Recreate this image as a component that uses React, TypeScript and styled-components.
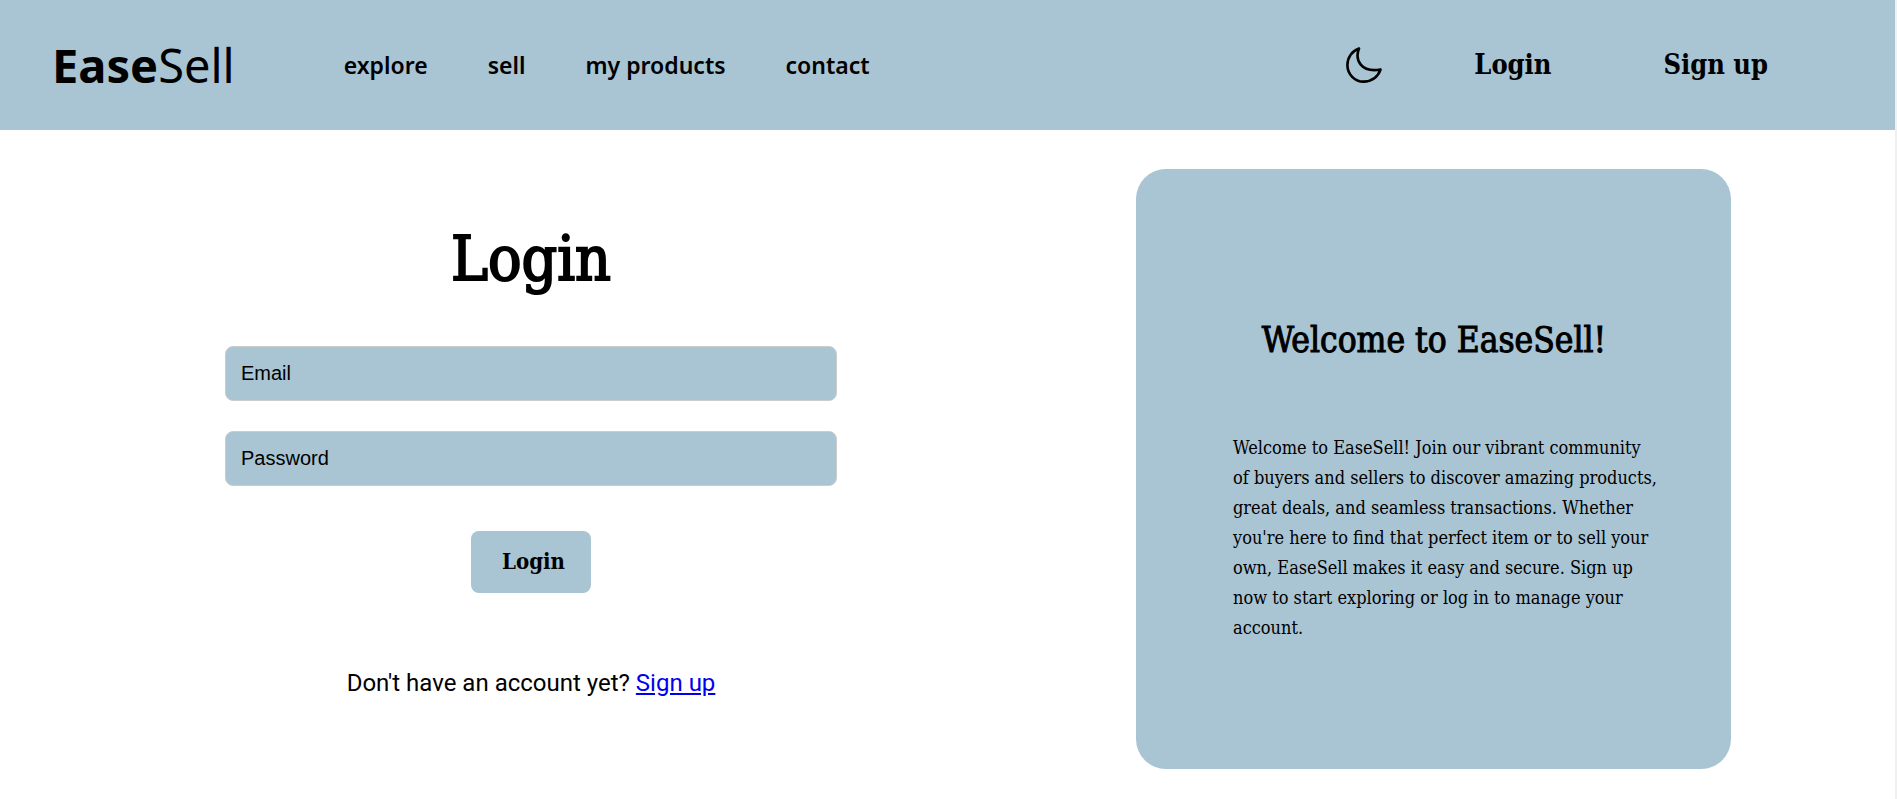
import React from "react";
import styled, { createGlobalStyle, ThemeProvider } from "styled-components";

const theme = {
  blue: "#a9c4d3",
  ink: "#000",
  slab: '"DejaVu Serif Condensed", "DejaVu Serif", serif',
  nav: '"Noto Sans", "Open Sans", sans-serif',
};
type Theme = typeof theme;
const t = (key: keyof Theme) => (p: any) => p.theme[key];

const GlobalStyle = createGlobalStyle`
  * { box-sizing: border-box; }
  body {
    margin: 0;
    min-height: 100vh;
    background: #fff;
    border-right: 2px solid #f0f0f0;
    color: ${t("ink")};
    font-family: Roboto, sans-serif;
  }
`;

const Header = styled.header`
  display: flex;
  align-items: center;
  height: 130px;
  padding: 0 127px 0 52px;
  background: ${t("blue")};
`;

const Logo = styled.a`
  color: inherit;
  text-decoration: none;
  font: 400 47px/64px ${t("nav")};
`;

const Nav = styled.nav`
  display: flex;
  gap: 60px;
  margin-left: 109px;
`;

const NavLink = styled.a`
  color: inherit;
  text-decoration: none;
  white-space: nowrap;
  font: 600 23px/32px ${t("nav")};
`;

const Actions = styled.div`
  display: flex;
  align-items: center;
  margin-left: auto;
`;

const ThemeButton = styled.button`
  display: flex;
  margin-right: 92px;
  padding: 0;
  border: 0;
  background: none;
  color: inherit;
`;

const ActionLink = styled.a`
  color: inherit;
  text-decoration: none;
  white-space: nowrap;
  font: 700 27px/32px ${t("slab")};
  font-stretch: condensed;

  & + & {
    margin-left: 112px;
  }
`;

const Main = styled.main`
  display: grid;
  grid-template-columns: minmax(0, 1fr) minmax(0, 595px);
  column-gap: 74px;
  padding: 39px 164px 30px 0;
`;

const Form = styled.form`
  display: flex;
  flex-direction: column;
  align-items: center;
  padding-top: 50px;
`;

const Title = styled.h1`
  margin: 0 0 47px;
  font: 400 62px/80px ${t("slab")};
  font-stretch: condensed;
  -webkit-text-stroke: 2px currentColor;
`;

const Field = styled.input`
  width: 612px;
  max-width: 100%;
  height: 55px;
  margin-bottom: 30px;
  padding: 0 15px;
  border: 1px solid #ccc;
  border-radius: 8px;
  background: ${t("blue")};
  color: inherit;
  font: 20px/24px "Liberation Sans", Arial, sans-serif;

  &::placeholder {
    color: ${t("ink")};
    opacity: 1;
  }
`;

const Submit = styled.button`
  width: 120px;
  height: 62px;
  margin-top: 15px;
  padding: 0 0 2px 5px;
  border: 0;
  border-radius: 8px;
  background: ${t("blue")};
  color: inherit;
  font: 700 22px/28px ${t("slab")};
  font-stretch: condensed;
`;

const Prompt = styled.p`
  margin: 74px 0 0;
  font-size: 24px;
  line-height: 32px;

  a {
    color: #0000ee;
  }
`;

const Card = styled.section`
  min-height: 600px;
  padding: 148px 72px 0 97px;
  border-radius: 30px;
  background: ${t("blue")};
`;

const CardTitle = styled.h2`
  margin: 0 24px 70px 0;
  text-align: center;
  font: 400 35px/46px ${t("slab")};
  font-stretch: condensed;
  -webkit-text-stroke: 1px currentColor;
`;

const CardText = styled.p`
  margin: 0;
  font: 400 18px/30px ${t("slab")};
  font-stretch: condensed;
`;

const MoonIcon = () => (
  <svg width="36" height="36" viewBox="0 0 36 36" fill="none" stroke="currentColor" strokeWidth="2.6" strokeLinejoin="round" aria-hidden="true">
    <path d="M13 1.5C6 4 1.400 10.500 1.400 18C1.400 27.300 8.800 34.600 17.500 34.600C25.500 34.600 32 30 34.500 22.500C15 26 8.500 13 13 1.500Z" />
  </svg>
);

const links = ["explore", "sell", "my products", "contact"];

export default function App() {
  return (
    <ThemeProvider theme={theme}>
      <GlobalStyle />
      <Header>
        <Logo href="#"><b>Ease</b>Sell</Logo>
        <Nav>
          {links.map((label) => (
            <NavLink key={label} href="#">{label}</NavLink>
          ))}
        </Nav>
        <Actions>
          <ThemeButton type="button" aria-label="Toggle dark mode"><MoonIcon /></ThemeButton>
          <ActionLink href="#">Login</ActionLink>
          <ActionLink href="#">Sign up</ActionLink>
        </Actions>
      </Header>
      <Main>
        <Form onSubmit={(e) => e.preventDefault()}>
          <Title>Login</Title>
          <Field type="email" placeholder="Email" aria-label="Email" />
          <Field type="password" placeholder="Password" aria-label="Password" />
          <Submit type="submit">Login</Submit>
          <Prompt>Don't have an account yet? <a href="#">Sign up</a></Prompt>
        </Form>
        <Card>
          <CardTitle>Welcome to EaseSell!</CardTitle>
          <CardText>
            Welcome to EaseSell! Join our vibrant community of buyers and sellers to discover
            amazing products, great deals, and seamless transactions. Whether you're here to find
            that perfect item or to sell your own, EaseSell makes it easy and secure. Sign up now
            to start exploring or log in to manage your account.
          </CardText>
        </Card>
      </Main>
    </ThemeProvider>
  );
}
